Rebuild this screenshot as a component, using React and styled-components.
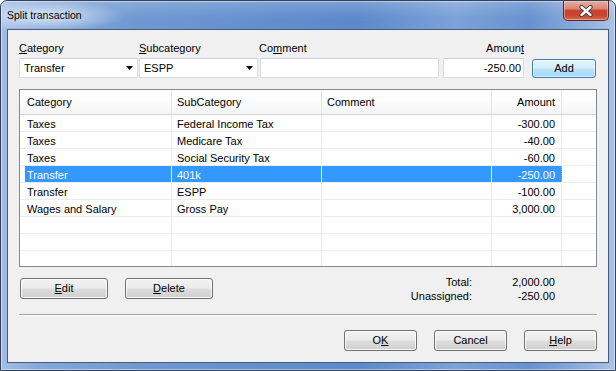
import React from 'react';
import styled, { createGlobalStyle } from 'styled-components';

const Global = createGlobalStyle`
  html, body { margin: 0; padding: 0; background: #ffffff; }
  body { font-family: "Liberation Sans", Arial, sans-serif; font-size: 11px; color: #000; }
  * { box-sizing: border-box; }
`;

const Window = styled.div`
  width: 616px;
  height: 371px;
  display: flex;
  flex-direction: column;
  border: 1px solid #2f4259;
  border-radius: 7px 7px 0 0;
  overflow: hidden;
  background: linear-gradient(to right, #a3bee4 0%, #86a8da 6%, #7099d2 22%, #6690cf 40%, #5c89cb 58%, #7da2d8 74%, #6791cf 86%, #94b3e0 96%, #a9c3e7 100%);
  box-shadow: inset 0 0 0 1px rgba(255, 255, 255, 0.45);
`;

const TitleBar = styled.div`
  height: 28px;
  flex: none;
  display: flex;
  align-items: flex-start;
  padding-left: 6px;
  background: radial-gradient(ellipse 80px 16px at 44px 15px, rgba(235, 243, 252, 0.85), rgba(235, 243, 252, 0) 100%),
    linear-gradient(to bottom, rgba(255, 255, 255, 0.18), rgba(255, 255, 255, 0) 60%);
`;

const Title = styled.span`
  font-size: 10.5px;
  line-height: 28px;
  color: #000;
`;

const CloseButton = styled.div`
  margin-left: auto;
  margin-right: 6px;
  width: 46px;
  height: 20px;
  border: 1px solid #5a2a26;
  border-top: none;
  border-radius: 0 0 5px 5px;
  background: linear-gradient(to bottom, #e9ada0 0%, #dc8675 40%, #c8432f 50%, #c9452f 75%, #dc6a4f 100%);
  box-shadow: inset 0 0 0 1px rgba(255, 220, 210, 0.45);
  display: flex;
  align-items: center;
  justify-content: center;
`;

const Client = styled.div`
  flex: 1;
  margin: 0 6px 7px 6px;
  border: 1px solid #455c7b;
  background: #f0f0f0;
  padding: 11px 11px 0 11px;
  display: flex;
  flex-direction: column;
`;

const FormGrid = styled.div`
  display: grid;
  grid-template-columns: 120px 120px 184px 89px 1fr;
  grid-template-rows: 15px 20px;
  row-gap: 2px;
  align-items: center;
`;

const Label = styled.label`
  line-height: 15px;
  white-space: nowrap;
  width: ${p => p.$w || 'auto'};
  text-align: ${p => (p.$right ? 'right' : 'left')};
`;

const Combo = styled.div`
  width: 119px;
  height: 20px;
  background: #fff;
  border: 1px solid #dadde2;
  border-top-color: #cfd3d9;
  display: flex;
  align-items: center;
  padding: 0 4px 0 4px;
  justify-content: space-between;
`;

const TextBox = styled.div`
  width: ${p => p.$w}px;
  height: 20px;
  background: #fff;
  border: 1px solid #dadde2;
  border-top-color: #cfd3d9;
  display: flex;
  align-items: center;
  justify-content: flex-end;
  padding: 0 2px;
  margin-left: ${p => p.$ml || 0}px;
`;

const Button = styled.div`
  width: ${p => p.$w}px;
  height: 21px;
  border: 1px solid ${p => (p.$default ? '#3c7fb1' : '#707070')};
  border-radius: 3px;
  background: ${p =>
    p.$default
      ? 'linear-gradient(to bottom, #e5f4fc 0%, #d4edfb 48%, #b9e3f9 52%, #a6d8f4 100%)'
      : 'linear-gradient(to bottom, #f2f2f2 0%, #ebebeb 48%, #dddddd 52%, #cfcfcf 100%)'};
  box-shadow: inset 0 0 0 1px ${p => (p.$default ? 'rgba(255,255,255,0.55)' : 'rgba(252,252,252,0.9)')};
  display: flex;
  align-items: center;
  justify-content: center;
  line-height: 1;
  margin-left: ${p => p.$ml || 0}px;
`;

const AddButton = styled(Button)`
  height: 19px;
`;

const List = styled.div`
  margin-top: 11px;
  height: 178px;
  border: 1px solid #828790;
  background: #fff;
  overflow: hidden;
  display: flex;
  flex-direction: column;
`;

const HeaderRow = styled.div`
  display: flex;
  height: 25px;
  flex: none;
  border-bottom: 1px solid #d5d5d5;
  background: linear-gradient(to bottom, #ffffff 0%, #fdfdfd 45%, #f3f4f6 100%);
`;

const Gutter = styled.div`
  width: 5px;
  flex: none;
`;

const HeaderCell = styled.div`
  width: ${p => (p.$w ? `${p.$w}px` : 'auto')};
  flex: ${p => (p.$w ? 'none' : '1')};
  border-right: ${p => (p.$w ? '1px solid #e2e4e8' : 'none')};
  padding: 0 6px 0 ${p => p.$pl}px;
  display: flex;
  align-items: center;
  justify-content: ${p => (p.$right ? 'flex-end' : 'flex-start')};
  white-space: nowrap;
`;

const Row = styled.div`
  display: flex;
  height: 17px;
  flex: none;
  border-bottom: 1px solid #ececec;
`;

const Cell = styled.div`
  width: ${p => (p.$w ? `${p.$w}px` : 'auto')};
  flex: ${p => (p.$w ? 'none' : '1')};
  border-right: ${p => (p.$w ? '1px solid #ececec' : 'none')};
  padding: 1px 6px 0 ${p => p.$pl}px;
  display: flex;
  align-items: center;
  justify-content: ${p => (p.$right ? 'flex-end' : 'flex-start')};
  white-space: nowrap;
  overflow: hidden;
  background: ${p => (p.$sel ? '#3399ff' : 'transparent')};
  color: ${p => (p.$sel ? '#ffffff' : '#000000')};
  ${p => (p.$focus ? 'border-right: 1px dotted #e39a4f;' : '')}
`;

const MidRow = styled.div`
  height: 47px;
  display: flex;
  align-items: flex-start;
`;

const ButtonGroup = styled.div`
  display: flex;
  gap: 17px;
  margin-top: 11px;
  margin-left: ${p => p.$ml || 0}px;
`;

const Totals = styled.div`
  margin-left: auto;
  margin-right: 42px;
  margin-top: 8px;
  display: grid;
  grid-template-columns: auto 83px;
  line-height: 14px;
  justify-items: end;
`;

const Separator = styled.div`
  height: 2px;
  border-top: 1px solid #a0a0a0;
  border-bottom: 1px solid #ffffff;
`;

const Footer = styled.div`
  display: flex;
  justify-content: flex-end;
  gap: 17px;
  padding-top: 14px;
`;

const Arrow = () => (
  <svg width="7" height="4" viewBox="0 0 7 4">
    <polygon points="0,0 7,0 3.5,4" fill="#000" />
  </svg>
);

const CloseGlyph = () => (
  <svg width="14" height="12" viewBox="0 0 14 12">
    <path d="M2.5 2 L11.5 10 M11.5 2 L2.5 10" stroke="#3a3a3a" strokeWidth="4.2" strokeLinecap="round" />
    <path d="M2.5 2 L11.5 10 M11.5 2 L2.5 10" stroke="#ffffff" strokeWidth="2.4" strokeLinecap="round" />
  </svg>
);

const columns = [
  { key: 'cat', title: 'Category', w: 147, pl: 2 },
  { key: 'sub', title: 'SubCategory', w: 150, pl: 5 },
  { key: 'com', title: 'Comment', w: 170, pl: 5 },
  { key: 'amt', title: 'Amount', w: 70, pl: 5, right: true },
];

const rows = [
  { cat: 'Taxes', sub: 'Federal Income Tax', com: '', amt: '-300.00' },
  { cat: 'Taxes', sub: 'Medicare Tax', com: '', amt: '-40.00' },
  { cat: 'Taxes', sub: 'Social Security Tax', com: '', amt: '-60.00' },
  { cat: 'Transfer', sub: '401k', com: '', amt: '-250.00', sel: true },
  { cat: 'Transfer', sub: 'ESPP', com: '', amt: '-100.00' },
  { cat: 'Wages and Salary', sub: 'Gross Pay', com: '', amt: '3,000.00' },
  { cat: '', sub: '', com: '', amt: '' },
  { cat: '', sub: '', com: '', amt: '' },
  { cat: '', sub: '', com: '', amt: '' },
];

export default function App() {
  return (
    <>
      <Global />
      <Window>
        <TitleBar>
          <Title>Split transaction</Title>
          <CloseButton>
            <CloseGlyph />
          </CloseButton>
        </TitleBar>
        <Client>
          <FormGrid>
            <Label><u>C</u>ategory</Label>
            <Label><u>S</u>ubcategory</Label>
            <Label>Co<u>m</u>ment</Label>
            <Label $w="81px" $right>Amoun<u>t</u></Label>
            <span />
            <Combo>
              <span>Transfer</span>
              <Arrow />
            </Combo>
            <Combo>
              <span>ESPP</span>
              <Arrow />
            </Combo>
            <TextBox $w={179} $ml={1} />
            <TextBox $w={81}>-250.00</TextBox>
            <AddButton $w={64} $default>Add</AddButton>
          </FormGrid>

          <List>
            <HeaderRow>
              <Gutter />
              {columns.map(c => (
                <HeaderCell key={c.key} $w={c.w} $pl={c.pl} $right={c.right}>
                  {c.title}
                </HeaderCell>
              ))}
              <HeaderCell $pl={0} />
            </HeaderRow>
            {rows.map((r, i) => (
              <Row key={i}>
                <Gutter />
                {columns.map(c => (
                  <Cell
                    key={c.key}
                    $w={c.w}
                    $pl={c.pl}
                    $right={c.right}
                    $sel={r.sel}
                    $focus={r.sel && c.key === 'amt'}
                  >
                    {r[c.key]}
                  </Cell>
                ))}
                <Cell $pl={0} />
              </Row>
            ))}
          </List>

          <MidRow>
            <ButtonGroup $ml={1}>
              <Button $w={88}><u>E</u>dit</Button>
              <Button $w={88}><u>D</u>elete</Button>
            </ButtonGroup>
            <Totals>
              <span>Total:</span>
              <span>2,000.00</span>
              <span>Unassigned:</span>
              <span>-250.00</span>
            </Totals>
          </MidRow>
          <Separator />
          <Footer>
            <Button $w={73}>O<u>K</u></Button>
            <Button $w={73}>Cancel</Button>
            <Button $w={73}><u>H</u>elp</Button>
          </Footer>
        </Client>
      </Window>
    </>
  );
}
